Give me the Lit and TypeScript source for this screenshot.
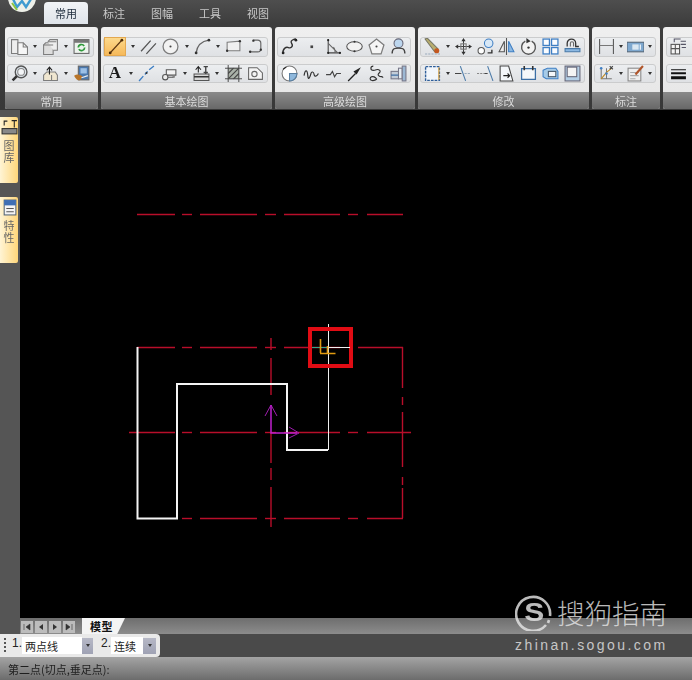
import { LitElement, html, css, svg } from "lit";
import { customElement } from "lit/decorators.js";

const D = "#3c3c3c";
const B = "#3f7fc4";
const G = "#7d7d7d";
const icons: Record<string, any> = {
  pages: svg`<path d="M.5 1.500h6v13h-6z" fill="#eee" stroke="${G}"/><path d="M6.500 4.500h5l4 4v7h-9z" fill="#f6f6f6" stroke="${G}"/><path d="M11.500 4.500v4h4" stroke="${G}"/>`,
  boxes: svg`<path d="M1.500 6.500l2-2h7v11h-9z" fill="#ddd" stroke="${G}"/><path d="M5.500 3.500l2-2h7v10h-4" fill="#eee" stroke="${G}"/><path d="M1.500 6.500h9M5.500 3.500h8" stroke="${G}"/>`,
  refresh: svg`<rect x="1" y="1.500" width="14" height="13" fill="#eef3ee" stroke="#666"/><rect x="1" y="1.500" width="14" height="3" fill="#777"/><path d="M5 9a3 3 0 0 1 5.500-1.500M11 9a3 3 0 0 1-5.500 1.500" fill="none" stroke="#2e9a3a" stroke-width="1.600"/>`,
  zoom: svg`<circle cx="9.500" cy="6.500" r="5.500" fill="#dfe6ec" stroke="#555" stroke-width="1.300"/><circle cx="9.500" cy="6.500" r="3.200" fill="#f4f6f8" stroke="#888"/><path d="M5.500 10.500l-4 4" stroke="#333" stroke-width="2.400"/>`,
  pageArrow: svg`<path d="M1.500 9.500l3-3h8l2 3v5h-13z" fill="#efe6d0" stroke="${G}"/><path d="M7 9V3M4.500 5L7 2l2.500 3" fill="none" stroke="#222"/><path d="M9 14.500v-5" stroke="${G}"/>`,
  brushDoc: svg`<rect x="5" y="1" width="10" height="13" fill="#4b78ad" stroke="#666"/><rect x="7" y="3" width="6" height="5" fill="#9cc0e6"/><path d="M1 10c3-2 6-1 8 1l-2 3c-2 1-4 0-6-4z" fill="#b8752a"/><path d="M8 12l6-2" stroke="#eee"/>`,
  line: svg`<path d="M3 14L14 2" stroke="#5a3410" stroke-width="1.300"/><circle cx="3" cy="14" r="1.300" fill="#4a2a08"/><circle cx="14" cy="2" r="1.300" fill="#4a2a08"/>`,
  dbl: svg`<path d="M1 12.500L10 2.500M6 15L15 5" stroke="#555" stroke-width="1.200"/>`,
  circle: svg`<circle cx="8" cy="8" r="7" fill="#f2f2f2" stroke="${G}" stroke-width="1.200"/><circle cx="8" cy="8" r="1" fill="#444"/>`,
  arc: svg`<path d="M2 14C3 7 7 3 14 2" fill="none" stroke="#666" stroke-width="1.200"/><circle cx="2" cy="14" r="1.300" fill="#333"/><circle cx="14" cy="2" r="1.300" fill="#333"/>`,
  rect: svg`<path d="M2 4l12-1v9H2z" fill="#f0f0f0" stroke="${G}"/><circle cx="2" cy="12" r="1.100" fill="#333"/><circle cx="14" cy="3" r="1.100" fill="#333"/>`,
  loop: svg`<path d="M6 2h4a3 3 0 0 1 3 3v5a3 3 0 0 1-3 3H4" fill="none" stroke="#666" stroke-width="1.100"/><circle cx="6" cy="2.500" r="1.100" fill="#333"/><circle cx="3" cy="13" r="1.200" fill="#333"/><circle cx="13" cy="11" r="1.100" fill="#333"/>`,
  dash: svg`<path d="M1 15l4-4.500M6.500 9l2.500-3M10.500 4.500L15 1" stroke="${B}" stroke-width="1.300"/><circle cx="8" cy="7.500" r="1" fill="#333"/>`,
  cart: svg`<path d="M5 4.500h9v5H5z" fill="#f3f3f3" stroke="#555"/><circle cx="4" cy="11.500" r="2.500" fill="#eee" stroke="#555"/><circle cx="12" cy="11" r="1.200" fill="#888"/><path d="M6.500 11.500h5" stroke="#555"/>`,
  stack: svg`<path d="M1 8.500h14v6H1z" fill="#d8d8d8" stroke="#555"/><path d="M1 11h14" stroke="#333" stroke-width="1.500"/><path d="M5 7V2M2.500 4.500L5 1.500l2.500 3" fill="none" stroke="#222"/><path d="M10 1.500h4M12 1.500v7M10 7h4" stroke="#444" stroke-width="1.300"/>`,
  hatch: svg`<rect x="3" y="3" width="10" height="10" fill="#aab2a8" stroke="#444"/><path d="M3 8l5-5M3 13l10-10M8 13l5-5" stroke="#444"/><path d="M0 3h3M13 3h3M3 0v3M13 0v3M0 13h3M13 13h3M3 13v3M13 13v3" stroke="#555"/>`,
  shape: svg`<path d="M1.500 2.500h8l5 5v6h-13z" fill="#f4f4f4" stroke="#666"/><circle cx="7" cy="8.500" r="2.500" fill="none" stroke="#666"/>`,
  spline: svg`<path d="M2 15C1 10 5 8 7 9s5-1 3-4 3-4 4-4" fill="none" stroke="#333" stroke-width="1.300"/><circle cx="14" cy="2" r="1.300" fill="#222"/><circle cx="2" cy="14" r="1.300" fill="#222"/>`,
  point: svg`<rect x="7" y="7" width="2.500" height="2.500" fill="#444"/>`,
  angle: svg`<path d="M3 1v13h12" fill="none" stroke="#444"/><path d="M3 5l9 9M8 8.500c1 1 1.500 3 1.500 5" fill="none" stroke="#666"/><circle cx="3" cy="2" r="1" fill="#222"/><circle cx="14" cy="14" r="1" fill="#222"/><circle cx="3" cy="14" r="1" fill="#222"/>`,
  ellipse: svg`<ellipse cx="8" cy="8" rx="7.300" ry="4.500" fill="#f2f2f2" stroke="#555"/><circle cx="8" cy="3.500" r="1" fill="#333"/><circle cx="8" cy="12.500" r="1" fill="#333"/>`,
  pentagon: svg`<path d="M8 1l7 5.500-2.700 8.500H3.700L1 6.500z" fill="#f5f5f5" stroke="${G}" stroke-width="1.200"/><circle cx="8" cy="8" r="1" fill="#444"/>`,
  person: svg`<circle cx="8" cy="5" r="4.200" fill="#bcd6ee" stroke="#667"/><path d="M2 14.500c0-5 3-5 6-5s6 0 6 5" fill="none" stroke="#444" stroke-width="1.300"/>`,
  pie: svg`<circle cx="8" cy="8" r="7" fill="#fff" stroke="#777"/><path d="M8 8h7a7 7 0 0 1-7 7z" fill="#8fb8dc" stroke="#5a7fa0"/><path d="M2 4l3-2" stroke="#222"/>`,
  wave: svg`<path d="M1 10c1-6 3-6 3.500 0s2.500 0 3 -2 2.500-2 3 1 3 1 4-1" fill="none" stroke="#333" stroke-width="1.100"/>`,
  zig: svg`<path d="M1 9h4l2-3 2 5 2-3h4" fill="none" stroke="#444" stroke-width="1.100"/>`,
  arrowUp: svg`<path d="M2 15l7-7" stroke="#222" stroke-width="1.200"/><path d="M14 2L7 6l3 3z" fill="#222"/>`,
  blob: svg`<path d="M5 1c-3 0-3 4 0 4s4-2 6 0-3 3-1 5 4 0 4 2M7 12c-2-2-5-1-5 1s3 2 5 1 1-1 0-2z" fill="none" stroke="#333" stroke-width="1.100"/>`,
  blocks: svg`<rect x="1" y="6" width="7" height="7" fill="#c2ccd8" stroke="#778"/><rect x="8" y="3" width="3.500" height="10" fill="#e8eef4" stroke="#778"/><rect x="11.500" y="1" width="3.500" height="14" fill="#9cb8d4" stroke="#778"/><path d="M1 9.500h7" stroke="#3f6fa4"/>`,
  brush: svg`<path d="M1 1l2-1 10 10-3 3z" fill="#b9ae6e" stroke="#776"/><circle cx="12" cy="12" r="2.400" fill="#c4571f"/><path d="M1 15h14" stroke="#9ab" stroke-dasharray="2 1"/>`,
  move: svg`<path d="M8 1v14M1 8h14" stroke="#444"/><path d="M8 0l2 3H6zM8 16l2-3H6zM0 8l3-2v4zM16 8l-3-2v4z" fill="#333"/><rect x="5.500" y="5.500" width="5" height="5" fill="none" stroke="#777"/>`,
  copy: svg`<circle cx="11" cy="5" r="4" fill="#d8e8f6" stroke="${B}"/><circle cx="4" cy="12" r="3" fill="#fff" stroke="#555"/><path d="M10 14h4v-3" fill="none" stroke="#333" stroke-width="1.300"/>`,
  mirror: svg`<path d="M8 0v16" stroke="#555"/><path d="M6 3v10H1z" fill="#eee" stroke="#555"/><path d="M10 3v10h5z" fill="#8cb8e2" stroke="#3f7fc4"/>`,
  rotate: svg`<path d="M5 3a6.500 6.500 0 1 0 6 0" fill="#f2f2f2" stroke="#555" stroke-width="1.300"/><path d="M6 0l4 3-4 2z" fill="#333"/><circle cx="8" cy="9" r="1.100" fill="#333"/>`,
  array: svg`<g fill="#fafcff" stroke="${B}" stroke-width="1.200"><rect x="1" y="1" width="6" height="6"/><rect x="9" y="1" width="6" height="6"/><rect x="1" y="9" width="6" height="6"/><rect x="9" y="9" width="6" height="6"/></g>`,
  offset: svg`<path d="M3 8V5a4 4 0 0 1 8 0v3h3" fill="none" stroke="#333" stroke-width="1.200"/><path d="M1 10h14v3H1z" fill="#8cb8e2" stroke="#4a7aa8"/><path d="M6 8V5a1.500 1.500 0 0 1 3 0v3" fill="none" stroke="#666"/>`,
  dotRect: svg`<rect x="1.500" y="1.500" width="13" height="13" fill="#f2f6fb" stroke="#2f5f9a" stroke-width="1.300" stroke-dasharray="2.500 1"/><path d="M14 2v12" stroke="#d89a30"/>`,
  trim: svg`<path d="M5 1l5 14" stroke="#4a7aa8"/><path d="M0 8h6" stroke="#444"/><path d="M9 8h6" stroke="#9ab" stroke-dasharray="2 1"/>`,
  extend: svg`<path d="M0 8h7" stroke="#888" stroke-dasharray="2 1"/><path d="M7 8h3" stroke="#444"/><path d="M10 1l5 14" stroke="#4a7aa8"/>`,
  stretch: svg`<path d="M2 1h8l4 14H2z" fill="#f4f7fa" stroke="#444"/><path d="M5 10h6M9 8l2 2-2 2" fill="none" stroke="#222"/>`,
  frame: svg`<path d="M1.500 3.500h13v10h-13z" fill="#f4f7fa" stroke="#3a6ea5" stroke-width="1.200"/><path d="M4 1v4M12 1v4" stroke="#333" stroke-width="1.500"/>`,
  cube: svg`<path d="M1 5l4-2h8l2 3v7H4l-3-2z" fill="#a6cbe8" stroke="#3f7fc4"/><rect x="6" y="6" width="7" height="5" fill="#f4f7fa" stroke="#456"/>`,
  page: svg`<rect x="1" y="1" width="14" height="14" fill="#b4cfe6" stroke="#667"/><rect x="3" y="2" width="9" height="9" fill="#f4f4f4" stroke="#667"/>`,
  dimH: svg`<path d="M1.500 1v14M14.500 1v14" stroke="#555"/><path d="M1.500 7h13" stroke="#777"/>`,
  dimBox: svg`<rect x="0" y="4" width="16" height="9" fill="#7ea8cf" stroke="#567"/><rect x="5" y="6" width="6" height="5" fill="#dbe8f2"/><path d="M12.500 6v5" stroke="#fff"/>`,
  dimTree: svg`<path d="M3 3v10h10M8 3v10" fill="none" stroke="#777"/><path d="M3 13l5-6 5-4" fill="none" stroke="#c08a20"/><circle cx="3" cy="3" r="1.200" fill="#3f7fc4"/><circle cx="8" cy="8" r="1.200" fill="#3f7fc4"/><path d="M11 1l3 3M14 1l-3 3" stroke="#444"/>`,
  note: svg`<rect x="1" y="3" width="12" height="12" fill="#eee" stroke="#888"/><path d="M3 7h8M3 10h8M3 13h5" stroke="#aaa"/><path d="M8 9l7-8" stroke="#b0552a" stroke-width="2"/>`,
  layers: svg`<rect x="1" y="6" width="8" height="9" fill="#f4f4f4" stroke="#555"/><path d="M1 10h8M5 6v9" stroke="#555"/><path d="M4 4V1h6M10 3h5M10 6h5M11 9h4" fill="none" stroke="#556"/>`,
  weight: svg`<path d="M1 4.500h14" stroke="#111" stroke-width="1"/><path d="M1 7.800h14" stroke="#111" stroke-width="2"/><path d="M1 12h14" stroke="#111" stroke-width="3"/>`,
};

type Cell = string;
interface Group { name: string; rows: Cell[][]; clip?: boolean }

const groups: Group[] = [
  { name: "常用", rows: [["pages", "^", "boxes", "^", "refresh"], ["zoom", "^", "pageArrow", "^", "brushDoc"]] },
  { name: "基本绘图", rows: [["*line", "^", "dbl", "circle", "^", "arc", "^", "rect", "loop"], ["A", "^", "dash", "cart", "^", "stack", "^", "hatch", "shape"]] },
  { name: "高级绘图", rows: [["spline", "point", "angle", "ellipse", "pentagon", "person"], ["pie", "wave", "zig", "arrowUp", "blob", "blocks"]] },
  { name: "修改", rows: [["brush", "^", "move", "copy", "mirror", "rotate", "array", "offset"], ["dotRect", "^", "trim", "extend", "stretch", "frame", "cube", "page"]] },
  { name: "标注", rows: [["dimH", "^", "dimBox", "^"], ["dimTree", "^", "note", "^"]] },
  { name: "", clip: true, rows: [["layers", "^"], ["weight", "^"]] },
];

const LONG = [[0, 38], [45, 55], [63, 120], [128, 139], [147, 203], [211, 221], [230, 266]];

@customElement("app-root")
export class AppRoot extends LitElement {
  static styles = css`
    :host { display: block; width: 692px; height: 680px; font-family: "Noto Sans CJK SC", "Liberation Sans", sans-serif; }
    * { box-sizing: border-box; }
    .root { position: relative; width: 692px; height: 680px; display: grid; grid-template-rows: 24px 86px 508px 16px 23px 23px; overflow: hidden; background: #000; }
    .header { position: relative; display: flex; align-items: flex-end; padding-left: 44px; background: linear-gradient(#4e4e4e, #3d3d3d); }
    .logo { position: absolute; left: 6px; top: 0; width: 32px; height: 14px; }
    .tab { width: 48px; height: 22px; display: flex; align-items: center; justify-content: center; font-size: 11px; color: #c8c8c8; filter: blur(.3px); }
    .tab.on { width: 44px; margin-right: 2px; color: #1c2a3a; border-radius: 4px 4px 0 0; background: linear-gradient(#f2f4f6, #dfe4ea); }
    .ribbon { display: grid; grid-template-columns: 93px 171px 140px 171px 68px 60px; gap: 3px; padding: 3px 0 1px 5px; background: linear-gradient(#3d3d3d, #383838); overflow: hidden; }
    .group { display: flex; flex-direction: column; border-radius: 3px 3px 2px 2px; overflow: hidden; background: linear-gradient(#efefef, #e6e6e6); filter: blur(.3px); }
    .body { flex: 1; display: flex; flex-direction: column; gap: 7px; padding: 10px 4px 0 2px; }
    .clip .body { width: 120px; padding-left: 3px; }
    .cluster { height: 19.500px; display: flex; align-items: center; justify-content: space-between; padding: 0 3px; border: 1px solid #cbcccd; border-radius: 3px; background: linear-gradient(#eceef0, #dfe1e4); }
    .clip .cluster { justify-content: flex-start; gap: 9px; }
    .icon { width: 17px; height: 17px; display: block; flex: none; }
    .hl { margin-left: -3px; width: 22px; height: 19px; display: flex; align-items: center; justify-content: center; flex: none; background: linear-gradient(#fcd98c, #f6b95a); border: 1px solid #e3a850; }
    .caret { width: 0; height: 0; flex: none; border: 2.500px solid transparent; border-top: 3px solid #333; border-bottom: 0; }
    .a { width: 16px; flex: none; text-align: center; font: bold 17px/16px "Liberation Serif", serif; color: #1a1a1a; }
    .label { height: 17px; display: flex; align-items: center; justify-content: center; font-size: 11px; color: #dcdcdc; background: linear-gradient(#8a8a8a, #686868); }
    .main { display: flex; min-height: 0; }
    .side { width: 20px; flex: none; display: flex; flex-direction: column; gap: 14px; padding-top: 7px; background: #555; }
    .dock { width: 18px; height: 66px; display: flex; flex-direction: column; align-items: center; gap: 4px; padding-top: 2px; border-radius: 0 2px 2px 0; background: linear-gradient(90deg, #fff4d4, #ffd67a); filter: blur(.3px); }
    .dock span { writing-mode: vertical-rl; text-orientation: upright; font-size: 11px; line-height: 14px; color: #666; letter-spacing: 1px; }
    .canvas { flex: 1; display: block; background: #000; }
    .tabs { display: flex; align-items: flex-end; background: linear-gradient(#6e6e6e, #8c8c8c); }
    .lead { width: 20px; height: 100%; background: #555; }
    .nav { display: flex; gap: 2px; padding: 3px 0 0 1px; width: 62px; height: 100%; }
    .nav span { width: 12px; height: 12px; display: flex; align-items: center; justify-content: center; background: #bcbcbc; }
    .nav svg { width: 8px; height: 8px; }
    .model { width: 43px; height: 16px; padding-left: 8px; font-size: 11px; font-weight: 700; line-height: 16px; color: #111; background: #f4f4f4; clip-path: polygon(0 0, 100% 0, 82% 100%, 0 100%); letter-spacing: .5px; }
    .cmd { display: flex; background: #4a4a4a; }
    .panel { width: 160px; display: flex; align-items: center; padding: 0 4px; background: #e9e9e9; border-radius: 0 4px 4px 0; }
    .panel > * { flex: none; }
    .grip { width: 2px; height: 15px; margin-right: 6px; background: repeating-linear-gradient(#555 0 2px, transparent 2px 4px); }
    .num { width: 10px; align-self: flex-start; margin-top: 2px; font: 12px "Liberation Sans", sans-serif; color: #222; }
    .input { height: 17px; display: flex; align-items: center; padding-left: 3px; font-size: 11px; color: #222; background: #fff; }
    .in1 { width: 60px; }
    .in2 { width: 32px; }
    .drop { width: 13px; height: 16px; display: flex; align-items: center; justify-content: center; background: linear-gradient(#b6b8c6, #9fa2b4); }
    .in1 + .drop { width: 11px; margin-right: 8px; }
    .drop i { border: 2.500px solid transparent; border-top: 3px solid #333; border-bottom: 0; }
    .status { display: flex; align-items: center; padding-left: 8px; font-size: 11px; color: #1e1e1e; background: linear-gradient(#a4a4a4, #6c6c6c); filter: blur(.25px); }
    .mark { position: absolute; left: 515px; top: 592px; width: 160px; color: rgba(228,228,228,.82); }
    .brand { display: flex; align-items: center; height: 40px; gap: 4px; }
    .ring { position: relative; width: 38px; height: 38px; flex: none; display: flex; align-items: center; justify-content: center; font: 700 25px/38px "Liberation Sans", sans-serif; }
    .ring b { display: block; transform: scaleX(1.2); font-weight: 700; }
    .ring svg { position: absolute; inset: 0; width: 38px; height: 38px; }
    .title { font-size: 27.500px; font-weight: 300; line-height: 38px; white-space: nowrap; }
    .url { margin-top: 4px; font: 14px/18px "Liberation Sans", sans-serif; letter-spacing: 2.430px; white-space: nowrap; }
  `;

  renderCell(c: Cell) {
    if (c === "^") return html`<i class="caret"></i>`;
    if (c === "A") return html`<span class="a">A</span>`;
    const hl = c.startsWith("*");
    const name = hl ? c.slice(1) : c;
    const ic = html`<svg class="icon" viewBox="0 0 16 16" fill="none">${icons[name]}</svg>`;
    return hl ? html`<span class="hl">${ic}</span>` : ic;
  }

  hDash(y: number, keep: number[][], x0 = 137) {
    return keep.map(([a, b]) => svg`<path d="M${x0 + a} ${y + 0.5}H${x0 + b}"/>`);
  }

  drawing() {
    const center = [[-8, 38], ...LONG.slice(1, 6), [230, 274]];
    const boxed = [...LONG.slice(0, 5), [221, 266]];
    const bottom = LONG.slice(1);
    const vert = [[347, 388], [397, 405], [412, 467], [477, 485], [488, 518]];
    const vc = [[338, 350], [358, 395], [433, 463], [468, 480], [487, 527]];
    return html`<svg class="canvas" viewBox="20 110 672 508" width="672" height="508" fill="none">
      <g stroke="#b80e2a" stroke-width="1.400">
        ${this.hDash(214, LONG)}
        ${this.hDash(347, boxed)}
        ${this.hDash(432, center)}
        ${this.hDash(518, bottom)}
        ${vert.map(([a, b]) => svg`<path d="M402.500 ${a}V${b}"/>`)}
        ${vc.map(([a, b]) => svg`<path d="M271 ${a}V${b}"/>`)}
      </g>
      <path d="M137.500 347V518.500H177V384H287V450H328" stroke="#f4f4f4" stroke-width="2"/>
      <path d="M328.500 324V450" stroke="#f0f0f0" stroke-width="1"/>
      <rect x="310" y="329" width="41" height="37" stroke="#e00c14" stroke-width="4"/>
      <path d="M312 347.500H328" stroke="#2fa88c"/>
      <path d="M328 347.500H350" stroke="#f0f0f0"/>
      <path d="M320.500 339V353M320 353.500H335.500M327.500 346V353" stroke="#e09a10" stroke-width="1.600"/>
      <path d="M265 416L271 405L277 416M289 427L299 433L289 438" stroke="#a01cb0" stroke-width="1"/>
      <path d="M271 405V433H297" stroke="#c020d0" stroke-width="1.500"/>
    </svg>`;
  }

  render() {
    return html`<div class="root">
      <div class="header">
        <svg class="logo" viewBox="0 0 32 14"><circle cx="16" cy="-2" r="14" fill="#eef0e8"/><path d="M7 -1l4 8 5-6 4 6 5-8" fill="none" stroke="#3f9bd0" stroke-width="2.400"/><path d="M6 3l5 7" stroke="#8cc63f" stroke-width="2"/></svg>
        <div class="tab on">常用</div><div class="tab">标注</div><div class="tab">图幅</div><div class="tab">工具</div><div class="tab">视图</div>
      </div>
      <div class="ribbon">
        ${groups.map((g) => html`<div class="group ${g.clip ? "clip" : ""}">
          <div class="body">${g.rows.map((r) => html`<div class="cluster">${r.map((c) => this.renderCell(c))}</div>`)}</div>
          <div class="label">${g.name}</div>
        </div>`)}
      </div>
      <div class="main">
        <div class="side">
          <div class="dock"><svg class="icon" viewBox="0 0 16 16" fill="none"><path d="M3 6V2h3M10 1.500h5M12.500 1.500V8" stroke="#222"/><rect x="1" y="9" width="14" height="5" fill="#888" stroke="#333"/></svg><span>图库</span></div>
          <div class="dock"><svg class="icon" viewBox="0 0 16 16" fill="none"><rect x="3" y="1" width="11" height="14" fill="#f4f4f4" stroke="#567"/><rect x="3" y="1" width="11" height="5" fill="#3f6fb4"/><path d="M5 9h7M5 12h7" stroke="#555"/></svg><span>特性</span></div>
        </div>
        ${this.drawing()}
      </div>
      <div class="tabs">
        <div class="lead"></div>
        <div class="nav">
          <span><svg viewBox="0 0 8 8"><path d="M1 1v6M7 1v6L3 4z" fill="#333" stroke="#333" stroke-width=".6"/></svg></span>
          <span><svg viewBox="0 0 8 8"><path d="M6 1v6L2 4z" fill="#333"/></svg></span>
          <span><svg viewBox="0 0 8 8"><path d="M2 1v6l4-3z" fill="#333"/></svg></span>
          <span><svg viewBox="0 0 8 8"><path d="M1 1v6l4-3zM7 1v6" fill="#333" stroke="#333" stroke-width=".6"/></svg></span>
        </div>
        <div class="model">模型</div>
      </div>
      <div class="cmd">
        <div class="panel">
          <div class="grip"></div>
          <span class="num">1.</span><div class="input in1">两点线</div><div class="drop"><i></i></div>
          <span class="num">2.</span><div class="input in2">连续</div><div class="drop"><i></i></div>
        </div>
      </div>
      <div class="status">第二点(切点,垂足点):</div>
      <div class="mark">
        <div class="brand">
          <div class="ring"><svg viewBox="0 0 38 38" fill="none"><path d="M31 32A17 17 0 1 1 35 23" stroke="currentColor" stroke-width="2.600"/><path d="M34 27l-1 3" stroke="currentColor" stroke-width="2.600"/></svg><b>S</b></div>
          <div class="title">搜狗指南</div>
        </div>
        <div class="url">zhinan.sogou.com</div>
      </div>
    </div>`;
  }
}
